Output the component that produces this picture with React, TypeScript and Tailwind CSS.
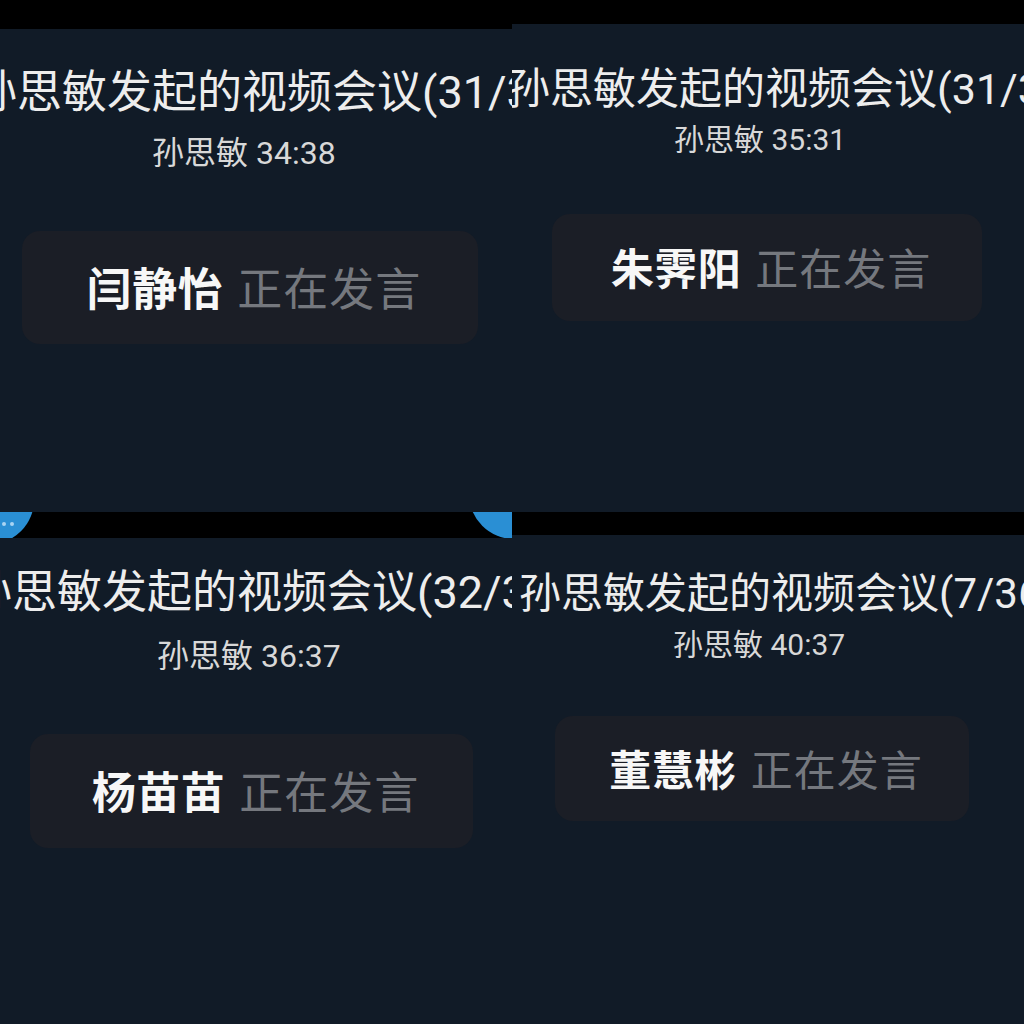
import React from "react";

const FONT = { fontFamily: 'Roboto, "Noto Sans CJK SC", "Noto Sans", sans-serif' };

function Pill({ name, cls, nameCls }: { name: string; cls: string; nameCls: string }) {
  return (
    <div className={"flex items-center justify-center rounded-[18px] bg-[#1b1e26] pl-[8px] pt-[6px] shrink-0 " + cls}>
      <span className={"font-bold tracking-[0.5px] text-[#f7f7f7] " + nameCls}>{name}</span>
      <span className={"ml-[14px] tracking-[1px] text-[#75787e] " + nameCls}>正在发言</span>
    </div>
  );
}

export default function App() {
  return (
    <div className="grid h-[1024px] w-[1024px] grid-cols-2 grid-rows-2 overflow-hidden bg-black" style={FONT}>
      {/* Top-left */}
      <div className="flex h-[512px] w-[512px] flex-col overflow-hidden bg-[#111b27]">
        <div className="h-[29px] shrink-0 bg-black" />
        <div className="ml-[-28px] mt-[41px] whitespace-nowrap text-[45px] leading-[45px] text-[#ededed]">
          孙思敏发起的视频会议(31/32)
        </div>
        <div className="ml-[152px] mt-[22px] whitespace-nowrap text-[32px] leading-[32px] text-[#d8d8d8]">
          孙思敏 34:38
        </div>
        <Pill
          name="闫静怡"
          cls="ml-[22px] mt-[62px] h-[113px] w-[456px]"
          nameCls="text-[45px] leading-[45px]"
        />
      </div>

      {/* Top-right */}
      <div className="flex h-[512px] w-[512px] flex-col overflow-hidden bg-[#111b27]">
        <div className="h-[24px] shrink-0 bg-black" />
        <div className="ml-[-5px] mt-[44px] whitespace-nowrap text-[43px] leading-[43px] text-[#ededed]">
          孙思敏发起的视频会议(31/32)
        </div>
        <div className="ml-[162px] mt-[14px] whitespace-nowrap text-[30px] leading-[30px] text-[#d8d8d8]">
          孙思敏 35:31
        </div>
        <Pill
          name="朱霁阳"
          cls="ml-[40px] mt-[59px] h-[107px] w-[430px]"
          nameCls="text-[43px] leading-[43px]"
        />
      </div>

      {/* Bottom-left */}
      <div className="flex h-[512px] w-[512px] flex-col overflow-hidden bg-[#111b27]">
        <div className="relative h-[26px] shrink-0 overflow-hidden bg-black">
          <div className="absolute left-[-54px] top-[-56px] flex h-[88px] w-[88px] items-end justify-end rounded-full bg-[#2a8fd4] pb-[18px] pr-[20px]">
            <div className="flex gap-[4px]">
              <span className="h-[4px] w-[4px] rounded-full bg-[#a9d4f2]" />
              <span className="h-[4px] w-[4px] rounded-full bg-[#a9d4f2]" />
              <span className="h-[4px] w-[4px] rounded-full bg-[#a9d4f2]" />
            </div>
          </div>
          <div className="absolute left-[469px] top-[-63px] h-[90px] w-[90px] rounded-full bg-[#2a8fd4]" />
        </div>
        <div className="ml-[-33px] mt-[32px] whitespace-nowrap text-[45px] leading-[45px] text-[#ededed]">
          孙思敏发起的视频会议(32/32)
        </div>
        <div className="ml-[157px] mt-[25px] whitespace-nowrap text-[32px] leading-[32px] text-[#d8d8d8]">
          孙思敏 36:37
        </div>
        <Pill
          name="杨苗苗"
          cls="ml-[30px] mt-[62px] h-[114px] w-[443px]"
          nameCls="text-[44px] leading-[44px]"
        />
      </div>

      {/* Bottom-right */}
      <div className="flex h-[512px] w-[512px] flex-col overflow-hidden bg-[#111b27]">
        <div className="h-[23px] shrink-0 bg-black" />
        <div className="ml-[7px] mt-[38px] whitespace-nowrap text-[42px] leading-[42px] text-[#ededed]">
          孙思敏发起的视频会议(7/36)
        </div>
        <div className="ml-[161px] mt-[15px] whitespace-nowrap text-[30px] leading-[30px] text-[#d8d8d8]">
          孙思敏 40:37
        </div>
        <Pill
          name="董慧彬"
          cls="ml-[43px] mt-[56px] h-[105px] w-[414px]"
          nameCls="text-[42px] leading-[42px]"
        />
      </div>
    </div>
  );
}
